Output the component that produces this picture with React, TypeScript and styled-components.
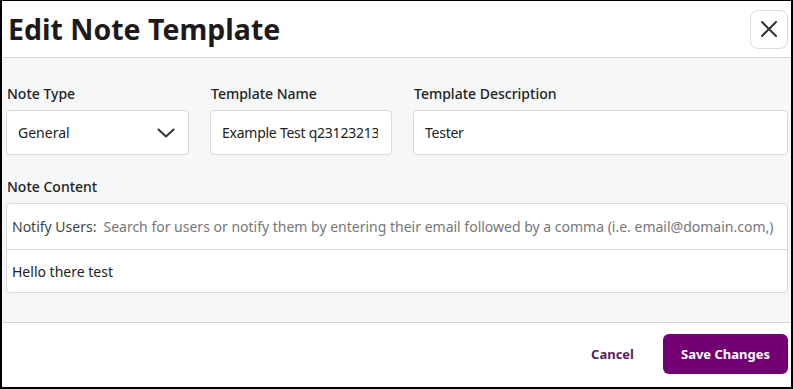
import React, { useState } from 'react';
import styled, { createGlobalStyle } from 'styled-components';

const GlobalStyle = createGlobalStyle`
  html, body {
    margin: 0;
    padding: 0;
    background: #ffffff;
  }
  * {
    box-sizing: border-box;
  }
  body {
    font-family: 'Noto Sans', 'Open Sans', Arial, sans-serif;
    color: #222;
  }
`;

const Modal = styled.div`
  width: 793px;
  height: 389px;
  display: flex;
  flex-direction: column;
  background: #fff;
  border: 2px solid #000;
  border-top-width: 1px;
`;

const Header = styled.header`
  height: 57px;
  display: flex;
  align-items: center;
  justify-content: space-between;
  padding: 0 3px 0 6px;
  border-bottom: 1px solid #d6d6d6;
`;

const Title = styled.h1`
  margin: 0;
  font-size: 28.5px;
  font-weight: 700;
  color: #1e1a1a;
  letter-spacing: 0;
`;

const CloseButton = styled.button`
  width: 38px;
  height: 39px;
  border: 1px solid #dcdcdc;
  border-radius: 8px;
  background: #fff;
  display: flex;
  align-items: center;
  justify-content: center;
  padding: 0;
  cursor: pointer;
`;

const Body = styled.main`
  flex: 1;
  background: #f6f7f9;
  padding: 26px 3px 0 4px;
  border-bottom: 1px solid #d6d6d6;
`;

const FieldRow = styled.div`
  display: grid;
  grid-template-columns: 183px 182px 1fr;
  column-gap: 21px;
`;

const Field = styled.div`
  display: flex;
  flex-direction: column;
`;

const Label = styled.label`
  font-size: 14px;
  font-weight: 500;
  color: #222;
  margin: 0 0 6px 1px;
  line-height: 20px;
`;

const InputBox = styled.div`
  height: 45px;
  background: #fff;
  border: 1px solid #d9d9d9;
  border-radius: 4px;
  display: flex;
  align-items: center;
  justify-content: space-between;
  padding: 0 13px 0 11px;
  overflow: hidden;
`;

const SelectValue = styled.span`
  font-size: 14px;
  color: #222;
`;

const Input = styled.input`
  border: none;
  outline: none;
  background: transparent;
  font-family: inherit;
  font-size: 14px;
  letter-spacing: -0.25px;
  color: #222;
  width: 100%;
  padding: 0;
`;

const ContentSection = styled.section`
  margin-top: 22px;
  display: flex;
  flex-direction: column;
`;

const ContentBox = styled.div`
  background: #fff;
  border: 1px solid #d9d9d9;
  border-radius: 4px;
  display: flex;
  flex-direction: column;
`;

const NotifyRow = styled.div`
  height: 46px;
  display: flex;
  align-items: center;
  gap: 7px;
  padding: 0 5px;
  border-bottom: 1px solid #d9d9d9;
  font-size: 14px;
  white-space: nowrap;
  overflow: hidden;
`;

const NotifyLabel = styled.span`
  color: #444;
`;

const NotifyInput = styled.input`
  flex: 1;
  border: none;
  outline: none;
  font-family: inherit;
  font-size: 14px;
  padding: 0;
  background: transparent;
  &::placeholder {
    color: #777;
  }
`;

const Editor = styled.div`
  height: 42px;
  display: flex;
  align-items: center;
  padding: 0 5px;
  font-size: 14px;
  color: #222;
`;

const Footer = styled.footer`
  height: 64px;
  display: flex;
  align-items: center;
  justify-content: flex-end;
  gap: 29px;
  padding: 0 3px 2px 0;
`;

const TextButton = styled.button`
  border: none;
  background: none;
  font-family: inherit;
  font-size: 13px;
  font-weight: 700;
  color: #5c1a5c;
  cursor: pointer;
  padding: 0;
`;

const PrimaryButton = styled.button`
  width: 125px;
  height: 40px;
  border: none;
  border-radius: 6px;
  background: #730073;
  color: #fff;
  font-family: inherit;
  font-size: 13px;
  font-weight: 700;
  cursor: pointer;
`;

export default function App() {
  const [noteType] = useState('General');
  const [name, setName] = useState('Example Test q23123213');
  const [description, setDescription] = useState('Tester');

  return (
    <>
      <GlobalStyle />
      <Modal>
        <Header>
          <Title>Edit Note Template</Title>
          <CloseButton aria-label="Close">
            <svg width="20" height="20" viewBox="0 0 20 20" fill="none" stroke="#333" strokeWidth="2" strokeLinecap="round">
              <path d="M3 3 L17 17 M17 3 L3 17" />
            </svg>
          </CloseButton>
        </Header>
        <Body>
          <FieldRow>
            <Field>
              <Label>Note Type</Label>
              <InputBox>
                <SelectValue>{noteType}</SelectValue>
                <svg width="18" height="10" viewBox="0 0 18 10" fill="none" stroke="#333" strokeWidth="2" strokeLinecap="round" strokeLinejoin="round">
                  <path d="M1.5 1.5 L9 8.5 L16.5 1.5" />
                </svg>
              </InputBox>
            </Field>
            <Field>
              <Label>Template Name</Label>
              <InputBox>
                <Input value={name} onChange={(e) => setName(e.target.value)} />
              </InputBox>
            </Field>
            <Field>
              <Label>Template Description</Label>
              <InputBox>
                <Input value={description} onChange={(e) => setDescription(e.target.value)} />
              </InputBox>
            </Field>
          </FieldRow>
          <ContentSection>
            <Label>Note Content</Label>
            <ContentBox>
              <NotifyRow>
                <NotifyLabel>Notify Users:</NotifyLabel>
                <NotifyInput placeholder="Search for users or notify them by entering their email followed by a comma (i.e. email@domain.com,)" />
              </NotifyRow>
              <Editor>Hello there test</Editor>
            </ContentBox>
          </ContentSection>
        </Body>
        <Footer>
          <TextButton>Cancel</TextButton>
          <PrimaryButton>Save Changes</PrimaryButton>
        </Footer>
      </Modal>
    </>
  );
}
